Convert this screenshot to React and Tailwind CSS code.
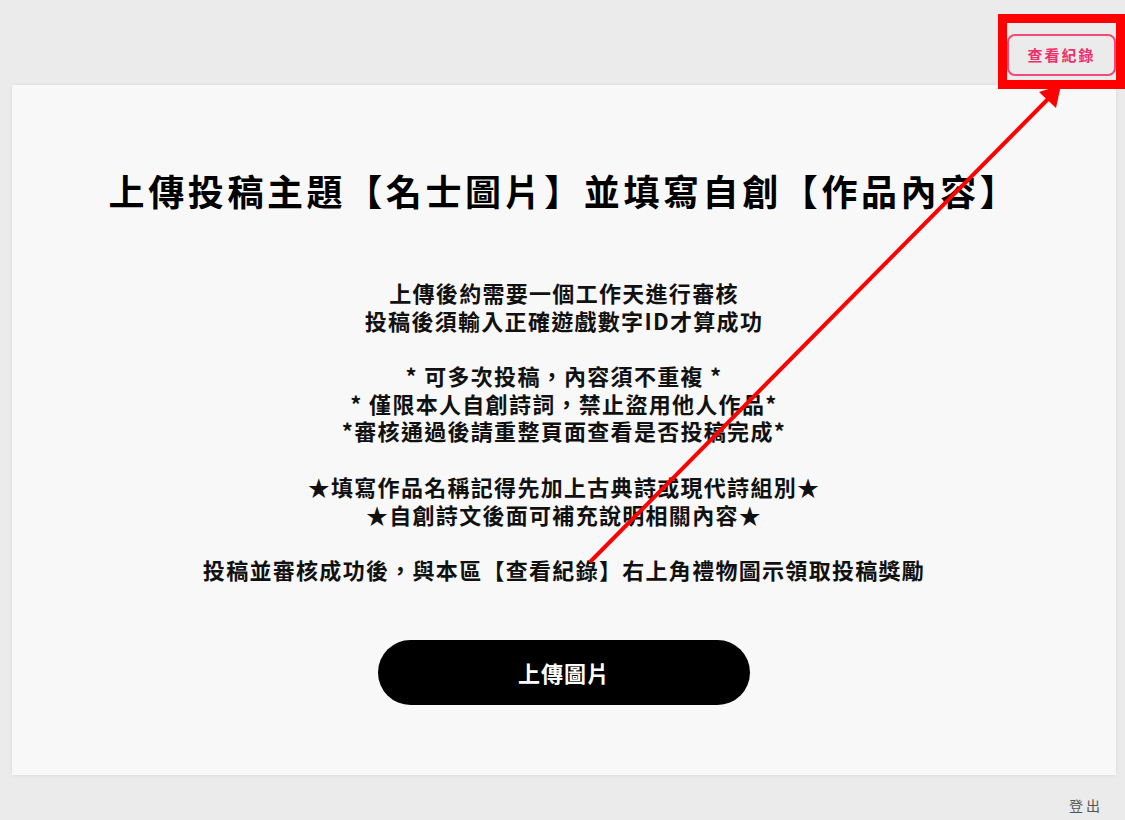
const lines = [
  '上傳後約需要一個工作天進行審核',
  '投稿後須輸入正確遊戲數字ID才算成功',
  '',
  '* 可多次投稿，內容須不重複 *',
  '* 僅限本人自創詩詞，禁止盜用他人作品*',
  '*審核通過後請重整頁面查看是否投稿完成*',
  '',
  '★填寫作品名稱記得先加上古典詩或現代詩組別★',
  '★自創詩文後面可補充說明相關內容★',
  '',
  '投稿並審核成功後，與本區【查看紀錄】右上角禮物圖示領取投稿獎勵',
];

export default function App() {
  return (
    <div
      className="relative min-h-[820px] w-full bg-[#ebebeb] overflow-hidden"
      style={{ fontFamily: '"Noto Sans CJK TC", "Noto Sans", sans-serif' }}
    >
      {/* top bar */}
      <div className="flex h-[85px] items-start justify-end pr-[9px] pt-[34px]">
        <button className="h-[42px] w-[109px] rounded-[8px] border-2 border-[#f24a78] text-[15px] font-bold tracking-[2px] text-[#ef2f6b]">
          查看紀錄
        </button>
      </div>

      {/* card */}
      <div className="ml-[12px] mr-[9px] flex h-[690px] flex-col items-center bg-[#f8f8f8] pt-[81px] shadow-[0_0_4px_rgba(0,0,0,0.08)]">
        <h1 className="text-[36px] font-bold leading-[48px] tracking-[3.6px] text-black">
          上傳投稿主題【名士圖片】並填寫自創【作品內容】
        </h1>
        <div className="mt-[65px] flex flex-col items-center text-[22px] font-bold leading-[27.7px] tracking-[1.3px] text-[#111]">
          {lines.map((l, i) => (
            <p key={i} className="h-[27.7px] overflow-visible text-center">
              {l}
            </p>
          ))}
        </div>
        <button className="mt-[56px] h-[65px] w-[372px] rounded-full bg-black text-[22px] font-bold tracking-[1px] text-white">
          上傳圖片
        </button>
      </div>

      <div className="flex justify-end pr-[22px] pt-[20px] text-[14px] tracking-[3px] text-[#555]">
        登出
      </div>

      {/* annotation overlay */}
      <div className="pointer-events-none absolute left-[998px] top-[14px] h-[75px] w-[127px] border-[9px] border-[#ff0000]" />
      <svg
        className="pointer-events-none absolute left-0 top-0"
        width="1125"
        height="820"
        viewBox="0 0 1125 820"
      >
        <line x1="590" y1="562" x2="1050" y2="97" stroke="#ff0000" strokeWidth="4" />
        <polygon points="1061,85 1056,108 1039,92" fill="#ff0000" />
      </svg>
    </div>
  );
}
